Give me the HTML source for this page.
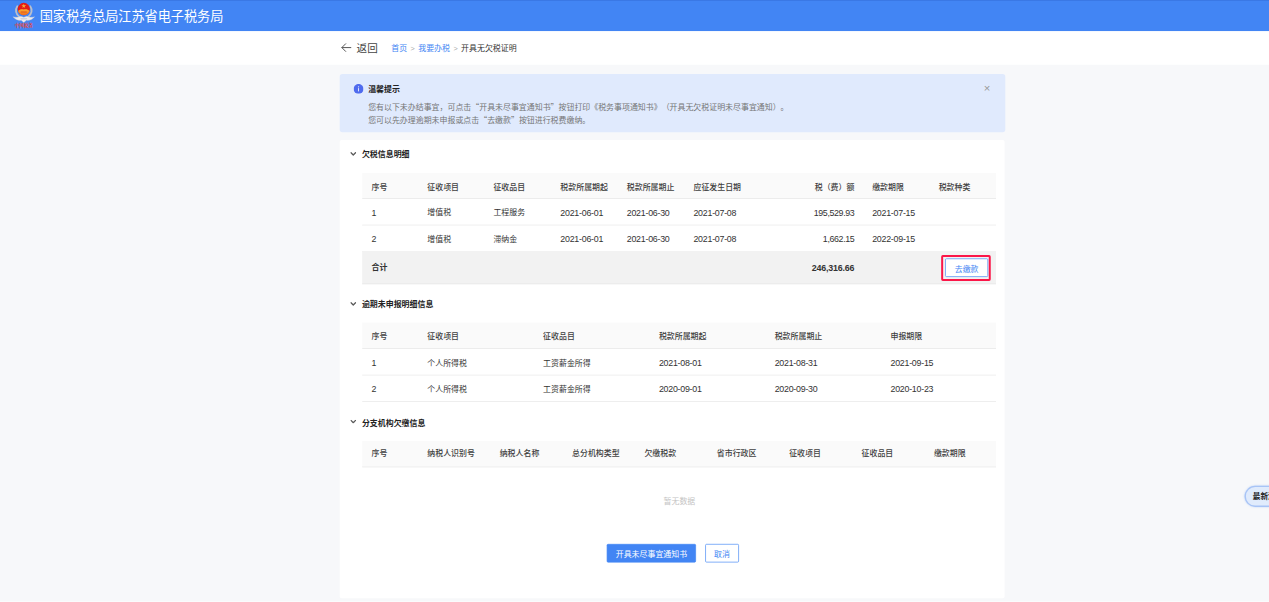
<!DOCTYPE html><html lang="zh-CN"><head><meta charset="utf-8"><title>开具无欠税证明</title><style>
*{box-sizing:border-box;margin:0;padding:0}
html,body{width:1269px;height:602px;overflow:hidden;background:#f7f8fa}
body{font-family:"Liberation Sans", "Noto Sans CJK SC", sans-serif;font-size:12px;color:#333;text-spacing-trim:space-all}
.q{font-family:"Noto Sans CJK SC",sans-serif}
#wrap{position:absolute;left:0;top:0;width:1920px;height:911px;transform:scale(0.660937);transform-origin:0 0;background:#f7f8fa;overflow:hidden}
.abs{position:absolute}
#hdr{position:absolute;left:0;top:0;width:1920px;height:50px;background:#4285f4;box-shadow:inset 0 1.2px 0 rgba(20,60,160,.22)}
#hdr .ttl{position:absolute;left:60px;top:0;height:51px;line-height:51px;font-size:20px;color:#fff;white-space:nowrap;letter-spacing:-.15px}
#bar{position:absolute;left:0;top:46.5px;width:1920px;height:51.4px;background:#fff}
#back{position:absolute;left:539.5px;top:-.6px;height:54.4px;line-height:54.4px;font-size:16px;color:#444;white-space:nowrap}
#crumb{position:absolute;left:592px;top:-.6px;height:54px;line-height:54px;font-size:12px;white-space:nowrap;color:#333}
#crumb a{color:#4285f4;text-decoration:none}
#crumb i{font-style:normal;color:#aaa;margin:0 5.2px;font-size:11px}
#alert{position:absolute;left:514px;top:112px;width:1006.5px;height:88px;background:#e0eafd;border-radius:4px}
#alert .t{position:absolute;left:43px;top:13.8px;height:18px;line-height:18px;font-weight:700;color:#222;white-space:nowrap}
#alert .p{position:absolute;left:43px;top:40.8px;line-height:17.1px;color:#757575;white-space:nowrap}
#alert .x{position:absolute;right:18px;top:13px;width:18px;height:18px;line-height:18px;text-align:center;color:#999;font-size:17px}
#card{position:absolute;left:513.7px;top:212px;width:1006.8px;height:692.8px;background:#fff;border-radius:3px}
.sec{position:absolute;left:547.6px;height:20px;line-height:20px;font-weight:700;color:#222;white-space:nowrap}
.chev{position:absolute;left:530px;width:9px;height:6px}
.row{position:absolute;left:548px;width:959px;white-space:nowrap}
.row.h{background:#fafafa;font-weight:500;color:#404040;border-bottom:1px solid #e6e6e6}
.row.b{border-bottom:1px solid #e6e6e6;color:#333}
.row.tot{background:#f2f2f2;font-weight:700;border-bottom:1px solid #e4e4e4}
.row span{position:absolute;top:0;height:100%}
.row span.r{text-align:right}
.num{font-size:13.4px;letter-spacing:-.38px}
.row span.r.num{letter-spacing:-.55px}
.row span.r.tb{letter-spacing:-.25px}
.row span.r{letter-spacing:0}
.btn{position:absolute;height:28px;line-height:26px;border:1px solid #4285f4;border-radius:2px;text-align:center;white-space:nowrap;font-size:12px}
.btn.pri{background:#4285f4;color:#fff}
.btn.def{background:#fff;color:#4285f4}
#empty{position:absolute;left:548px;width:960px;text-align:center;color:#c4c4c4;font-size:12px;line-height:20px;height:20px}
#hl{position:absolute;border:3.9px solid #fb1648;border-radius:2.5px}
#pill{position:absolute;left:1883px;top:735px;width:80px;height:31.5px;border:2px solid #a8c4f6;border-radius:16px;background:#e0ebfc;box-shadow:0 0 3px rgba(66,133,244,.35);line-height:29px;padding-left:10.5px;font-weight:700;font-size:11.5px;color:#222;white-space:nowrap}
</style></head><body><div id="wrap">
<div id="hdr"><svg class="abs" style="left:18px;top:2px;width:36px;height:44px" viewBox="0 0 36 44">
<defs><linearGradient id="lg" x1="0" y1="0" x2="0" y2="1"><stop offset="0" stop-color="#f9b233"/><stop offset="1" stop-color="#ee6a1c"/></linearGradient></defs>
<path d="M8.2 7.4 C4.6 12.5 5.8 20 11.5 23.6 M27.8 7.4 C31.4 12.5 30.2 20 24.5 23.6" fill="none" stroke="#b9bfcc" stroke-width="2.8" stroke-linecap="round"/>
<path d="M1.6 23.2 C6 24.6 10 24.4 13.5 22.6 L18 24.2 L22.500 22.6 C26 24.4 30 24.600 34.4 23.2 C31.500 27.2 27 29.2 22 28.8 L18 32 L14 28.8 C9 29.2 4.500 27.2 1.6 23.2 Z" fill="#ececef" stroke="#c6c9d2" stroke-width=".5"/>
<circle cx="18" cy="11.6" r="9.3" fill="#e31b17"/>
<path d="M9.3 14.6 C11.500 12.2 14.500 11.4 18 12.2 C21.500 11.4 24.500 12.2 26.7 14.6 C25.6 18.6 22.2 20.900 18 20.900 C13.8 20.900 10.4 18.6 9.3 14.6 Z" fill="url(#lg)"/>
<path d="M18 3.600 L18.9 6.1 L21.500 6.1 L19.4 7.700 L20.2 10.2 L18 8.700 L15.8 10.2 L16.6 7.700 L14.500 6.1 L17.100 6.1 Z" fill="#f6c944" opacity=".85"/>
<rect x="13.2" y="15.4" width="9.6" height="1.500" rx=".7" fill="#d9461a" opacity=".75"/>
<path d="M12.5 25.2 L23.5 25.2 L22 27.400 L14 27.400 Z" fill="#d0d3da"/>
<text x="18" y="39.6" font-size="6.9" text-anchor="middle" fill="#ee4330" font-weight="700" font-family='"Liberation Serif","Noto Serif CJK SC",serif'>中国税务</text>
</svg><div class="ttl">国家税务总局江苏省电子税务局</div></div>
<div id="bar"><svg class="abs" style="left:516px;top:18.3px;width:16px;height:14px" viewBox="0 0 16 14"><path d="M15 7 H1.5 M7 1.2 L1.2 7 L7 12.8" fill="none" stroke="#555" stroke-width="1.5" stroke-linecap="round" stroke-linejoin="round"/></svg><div id="back">返回</div><div id="crumb"><a>首页</a><i>&gt;</i><a>我要办税</a><i>&gt;</i><span>开具无欠税证明</span></div></div>
<div id="alert"><svg class="abs" style="left:20.8px;top:14.8px;width:15px;height:15px" viewBox="0 0 16 16"><circle cx="8" cy="8" r="8" fill="#4f6bee"/><rect x="7.25" y="6.8" width="1.5" height="5.2" fill="#fff" opacity=".92"/><circle cx="8" cy="4.7" r=".95" fill="#fff" opacity=".92"/></svg><div class="t">温馨提示</div><div class="p">您有以下未办结事宜，可点击<span class="q">“</span>开具未尽事宜通知书<span class="q">”</span>按钮打印《税务事项通知书》（开具无欠税证明未尽事宜通知）。<br>您可以先办理逾期未申报或点击<span class="q">“</span>去缴款<span class="q">”</span>按钮进行税费缴纳。</div><div class="x">×</div></div>
<div id="card"></div>
<svg class="chev" style="top:229.7px" viewBox="0 0 9 6"><path d="M1.1 1 L4.5 4.5 L7.9 1" fill="none" stroke="#5c5c5c" stroke-width="2" stroke-linecap="round" stroke-linejoin="round"/></svg><div class="sec" style="top:222.7px">欠税信息明细</div>
<div class="row h" style="top:262.05px;height:38.48px;line-height:42.88px"><span style="left:14.0px">序号</span><span style="left:98.5px">征收项目</span><span style="left:198.5px">征收品目</span><span style="left:299.8px">税款所属期起</span><span style="left:400.3px">税款所属期止</span><span style="left:501.2px">应征发生日期</span><span class="r" style="left:544.7px;width:200px">税（费）额</span><span style="left:771.6px">缴款期限</span><span style="left:872.2px">税款种类</span></div>
<div class="row b" style="top:300.03px;height:40.90px;line-height:45.30px"><span class="num" style="left:14.0px">1</span><span style="left:98.5px">增值税</span><span style="left:198.5px">工程服务</span><span class="num" style="left:299.8px">2021-06-01</span><span class="num" style="left:400.3px">2021-06-30</span><span class="num" style="left:501.2px">2021-07-08</span><span class="r num" style="left:544.7px;width:200px">195,529.93</span><span class="num" style="left:771.6px">2021-07-15</span></div>
<div class="row b" style="top:340.43px;height:40.29px;line-height:44.69px"><span class="num" style="left:14.0px">2</span><span style="left:98.5px">增值税</span><span style="left:198.5px">滞纳金</span><span class="num" style="left:299.8px">2021-06-01</span><span class="num" style="left:400.3px">2021-06-30</span><span class="num" style="left:501.2px">2021-07-08</span><span class="r num" style="left:544.7px;width:200px">1,662.15</span><span class="num" style="left:771.6px">2022-09-15</span></div>
<div class="row tot" style="top:380.22px;height:49.82px;line-height:51.22px"><span style="left:14.0px">合计</span><span class="r num tb" style="left:544.7px;width:200px">246,316.66</span></div>
<div class="btn def" style="left:1429.79px;top:390.96px;width:65.4px;height:28.0px;line-height:30.0px">去缴款</div>
<div id="hl" style="left:1423.89px;top:385.82px;width:75.0px;height:38.7px"></div>
<svg class="chev" style="top:456.9px" viewBox="0 0 9 6"><path d="M1.1 1 L4.5 4.5 L7.9 1" fill="none" stroke="#5c5c5c" stroke-width="2" stroke-linecap="round" stroke-linejoin="round"/></svg><div class="sec" style="top:449.9px">逾期未申报明细信息</div>
<div class="row h" style="top:488.09px;height:39.69px;line-height:42.49px"><span style="left:14.0px">序号</span><span style="left:98.5px">征收项目</span><span style="left:273.7px">征收品目</span><span style="left:448.9px">税款所属期起</span><span style="left:624.1px">税款所属期止</span><span style="left:799.3px">申报期限</span></div>
<div class="row b" style="top:527.28px;height:40.90px;line-height:46.90px"><span class="num" style="left:14.0px">1</span><span style="left:98.5px">个人所得税</span><span style="left:273.7px">工资薪金所得</span><span class="num" style="left:448.9px">2021-08-01</span><span class="num" style="left:624.1px">2021-08-31</span><span class="num" style="left:799.3px">2021-09-15</span></div>
<div class="row b" style="top:567.68px;height:39.84px;line-height:42.64px"><span class="num" style="left:14.0px">2</span><span style="left:98.5px">个人所得税</span><span style="left:273.7px">工资薪金所得</span><span class="num" style="left:448.9px">2020-09-01</span><span class="num" style="left:624.1px">2020-09-30</span><span class="num" style="left:799.3px">2020-10-23</span></div>
<svg class="chev" style="top:635.3px" viewBox="0 0 9 6"><path d="M1.1 1 L4.5 4.5 L7.9 1" fill="none" stroke="#5c5c5c" stroke-width="2" stroke-linecap="round" stroke-linejoin="round"/></svg><div class="sec" style="top:629.5px">分支机构欠缴信息</div>
<div class="row h" style="top:667.08px;height:39.69px;line-height:39.29px"><span style="left:14.0px">序号</span><span style="left:98.5px">纳税人识别号</span><span style="left:208.0px">纳税人名称</span><span style="left:317.5px">总分机构类型</span><span style="left:427.0px">欠缴税款</span><span style="left:536.5px">省市行政区</span><span style="left:646.0px">征收项目</span><span style="left:755.5px">征收品目</span><span style="left:865.0px">缴款期限</span></div>
<div id="empty" style="top:747.6px">暂无数据</div>
<div class="btn pri" style="left:918.39px;top:823.22px;width:134.5px;height:27.4px;line-height:30.0px">开具未尽事宜通知书</div>
<div class="btn def" style="left:1066.82px;top:823.22px;width:50.8px;height:27.4px;line-height:30.0px">取消</div>
<div id="pill">最新消息</div>
<div class="abs" style="left:0;top:910px;width:1920px;height:2px;background:#fff;opacity:.7"></div>
</div></body></html>
